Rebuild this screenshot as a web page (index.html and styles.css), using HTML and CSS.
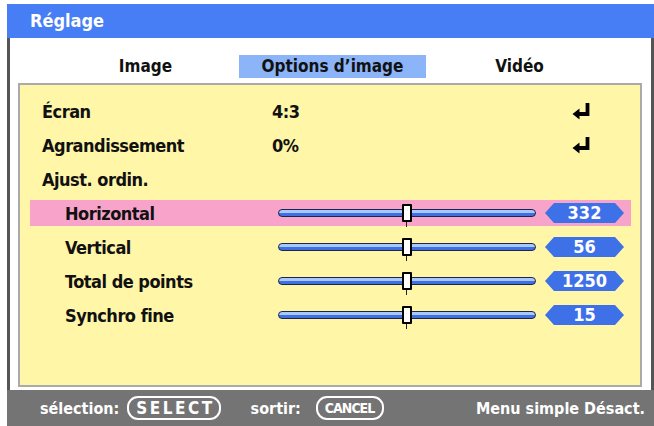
FILE: index.html
```html
<!DOCTYPE html>
<html lang="fr">
<head>
    <meta charset="UTF-8">
    <title>Réglage</title>
    <link rel="stylesheet" href="styles.css">
</head>
<body>
    <div class="osd">
        <div class="titlebar">Réglage</div>
        <div class="main">
            <!-- onglets -->
            <div class="tabs">
                <div class="tab">Image</div>
                <div class="tab active">Options d’image</div>
                <div class="tab">Vidéo</div>
            </div>
            <div class="panel">
                <div class="row">
                    <span class="label">Écran</span>
                    <span class="value">4:3</span>
                    <svg class="enter" width="19" height="18" viewBox="0 0 19 18"><path d="M15.5 1 V12 H6" fill="none" stroke="#000" stroke-width="3.8"/><path d="M0.5 12 L7.5 6.5 V17.5 Z" fill="#000"/></svg>
                </div>
                <div class="row">
                    <span class="label">Agrandissement</span>
                    <span class="value">0%</span>
                    <svg class="enter" width="19" height="18" viewBox="0 0 19 18"><path d="M15.5 1 V12 H6" fill="none" stroke="#000" stroke-width="3.8"/><path d="M0.5 12 L7.5 6.5 V17.5 Z" fill="#000"/></svg>
                </div>
                <div class="row">
                    <span class="label">Ajust. ordin.</span>
                </div>
                <div class="row sub selected">
                    <span class="label">Horizontal</span>
                    <div class="slider"><div class="track"></div><div class="thumb"></div></div>
                    <span class="badge">332</span>
                </div>
                <div class="row sub">
                    <span class="label">Vertical</span>
                    <div class="slider"><div class="track"></div><div class="thumb"></div></div>
                    <span class="badge">56</span>
                </div>
                <div class="row sub">
                    <span class="label">Total de points</span>
                    <div class="slider"><div class="track"></div><div class="thumb"></div></div>
                    <span class="badge">1250</span>
                </div>
                <div class="row sub">
                    <span class="label">Synchro fine</span>
                    <div class="slider"><div class="track"></div><div class="thumb"></div></div>
                    <span class="badge">15</span>
                </div>
            </div>
        </div>
        <!-- barre d'aide -->
        <div class="footer">
            <span>sélection:</span>
            <span class="key select">SELECT</span>
            <span class="gap">sortir:</span>
            <span class="key cancel">CANCEL</span>
            <span class="mode">Menu simple Désact.</span>
        </div>
    </div>
</body>
</html>
```

FILE: styles.css
```css
body {
    margin: 0;
    background-color: #fff;
    font-family: "DejaVu Sans Condensed", "DejaVu Sans", sans-serif;
    font-weight: bold;
}

.osd {
    margin: 4px 0 0 7px;
    width: 647px;
}

.titlebar {
    height: 34px;
    line-height: 34px;
    padding-left: 23px;
    background-color: #477ef5;
    color: #fff;
    font-size: 18px;
}

.main {
    height: 352px;
    background-color: #fff;
    border-left: 3px solid #555;
    border-right: 3px solid #555;
}

.tabs {
    display: grid;
    grid-template-columns: repeat(3, 187px);
    padding: 17px 0 0 42px;
    height: 28px;
}

.tab {
    height: 23px;
    line-height: 23px;
    text-align: center;
    font-size: 17px;
    color: #111;
}

.tab.active {
    background-color: #8cb4f8;
}

.panel {
    margin: 0 9px 0 8px;
    height: 287px;
    padding-top: 13px;
    background-color: #fff6a8;
    border: 2px solid #aaa;
}

.row {
    display: flex;
    align-items: center;
    height: 26px;
    margin: 0 9px 8px 10px;
    font-size: 18px;
    letter-spacing: -0.5px;
    color: #111;
}

.row.selected {
    background-color: #f8a3c9;
}

.label {
    width: 242px;
    padding-left: 12px;
    box-sizing: border-box;
}

.row.sub .label {
    padding-left: 35px;
}

.value {
    flex: 1;
}

.enter {
    margin-right: 40px;
}

.slider {
    position: relative;
    display: flex;
    align-items: center;
    width: 258px;
    height: 18px;
    margin-left: 6px;
}

.track {
    width: 100%;
    height: 6px;
    border: 1px solid #1c2550;
    border-radius: 4px;
    background: linear-gradient(#a9c8ff 0 45%, #3f70df 45% 100%);
}

.thumb {
    position: absolute;
    left: 124px;
    top: 0;
    width: 6px;
    height: 14px;
    background-color: #fff;
    border: 2px solid #000;
    border-radius: 1px;
}

.thumb::after {
    content: "";
    position: absolute;
    left: 2px;
    top: 16px;
    width: 1px;
    height: 5px;
    background-color: #222;
}

.badge {
    width: 79px;
    height: 20px;
    line-height: 20px;
    margin-left: 9px;
    background-color: #3e70e8;
    color: #fff;
    text-align: center;
    font-size: 18px;
    letter-spacing: 0;
    clip-path: polygon(9px 0, calc(100% - 9px) 0, 100% 50%, calc(100% - 9px) 100%, 9px 100%, 0 50%);
}

.footer {
    display: flex;
    align-items: center;
    height: 36px;
    padding: 0 9px 0 33px;
    background-color: #747474;
    color: #fff;
    font-size: 16px;
}

.key {
    height: 20px;
    line-height: 20px;
    padding: 0 6px;
    margin-left: 8px;
    border: 2px solid #fff;
    border-radius: 11px;
}

.key.select {
    font-size: 17px;
    letter-spacing: 2.5px;
    padding: 0 4px 0 7px;
}

.key.cancel {
    margin-left: 15px;
    font-size: 14px;
    letter-spacing: -1px;
    padding: 0 8px 0 7px;
}

.gap {
    margin-left: 30px;
}

.mode {
    margin-left: auto;
}
```
